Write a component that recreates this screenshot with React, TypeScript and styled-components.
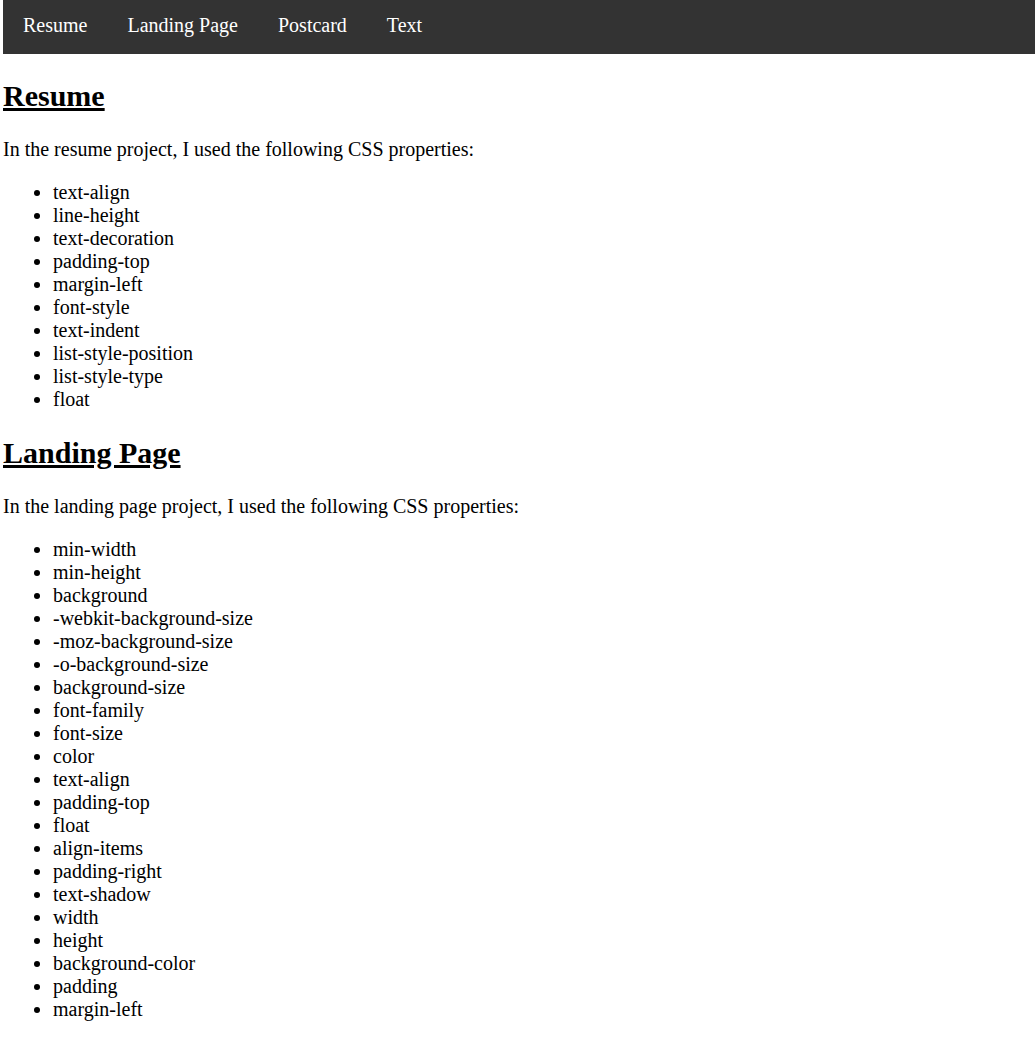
import React from "react";
import styled, { createGlobalStyle } from "styled-components";

const Global = createGlobalStyle`
  html, body { margin: 0; padding: 0; background: #fff; }
  body {
    padding-left: 3px;
    font-family: "Liberation Serif", "Times New Roman", serif;
    font-size: 20px;
    color: #000;
  }
`;

const Nav = styled.nav`
  display: flex;
  background: #333333;
  margin: 0;
`;

const NavLink = styled.a`
  display: block;
  color: #ffffff;
  text-decoration: none;
  padding: 14px 20px 17px;
  font-size: 20px;
  line-height: 23px;
`;

const Section = styled.section``;

const Title = styled.h2`
  font-size: 30px;
  font-weight: bold;
  text-decoration: underline;
  margin: 24.9px 0;
  line-height: 34px;
`;

const Para = styled.p`
  margin: 20px 0;
  line-height: 23px;
`;

const List = styled.ul`
  margin: 20px 0;
  padding-left: 50px;
  list-style: disc;
`;

const Item = styled.li`
  line-height: 23px;
`;

const sections = [
  {
    title: "Resume",
    project: "resume",
    items: [
      "text-align",
      "line-height",
      "text-decoration",
      "padding-top",
      "margin-left",
      "font-style",
      "text-indent",
      "list-style-position",
      "list-style-type",
      "float",
    ],
  },
  {
    title: "Landing Page",
    project: "landing page",
    items: [
      "min-width",
      "min-height",
      "background",
      "-webkit-background-size",
      "-moz-background-size",
      "-o-background-size",
      "background-size",
      "font-family",
      "font-size",
      "color",
      "text-align",
      "padding-top",
      "float",
      "align-items",
      "padding-right",
      "text-shadow",
      "width",
      "height",
      "background-color",
      "padding",
      "margin-left",
    ],
  },
];

export default function App() {
  return (
    <>
      <Global />
      <Nav>
        {["Resume", "Landing Page", "Postcard", "Text"].map((n) => (
          <NavLink key={n} href="#">
            {n}
          </NavLink>
        ))}
      </Nav>
      {sections.map((s) => (
        <Section key={s.title}>
          <Title>{s.title}</Title>
          <Para>
            In the {s.project} project, I used the following CSS properties:
          </Para>
          <List>
            {s.items.map((i, k) => (
              <Item key={k}>{i}</Item>
            ))}
          </List>
        </Section>
      ))}
    </>
  );
}
